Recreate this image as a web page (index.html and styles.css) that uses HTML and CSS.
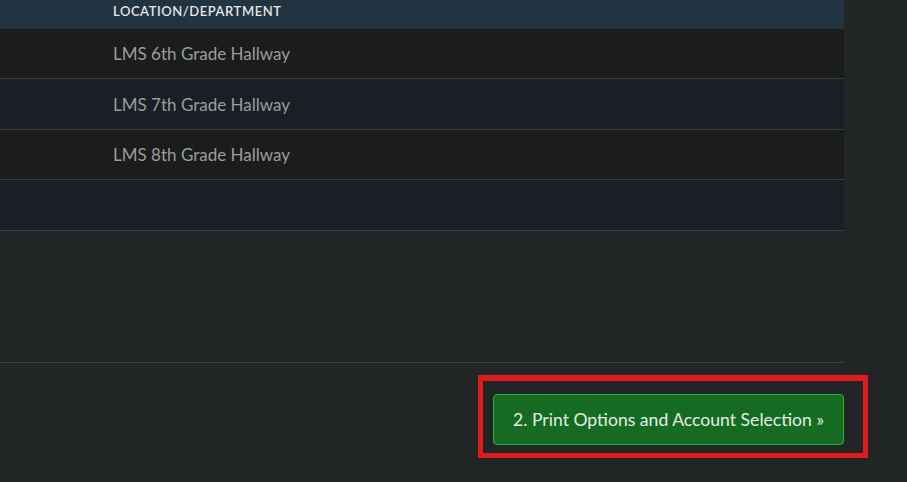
FILE: index.html
```html
<!DOCTYPE html>
<html>
<head>
<meta charset="utf-8">
<link rel="stylesheet" href="styles.css">
</head>
<body>
<div class="page">
  <div class="main">
    <div class="grid">
      <div class="row head"><div class="c-sel"></div><div class="c-loc">LOCATION/DEPARTMENT</div></div>
      <div class="row odd r1"><div class="c-sel"></div><div class="c-loc">LMS 6th Grade Hallway</div></div>
      <div class="row even"><div class="c-sel"></div><div class="c-loc">LMS 7th Grade Hallway</div></div>
      <div class="row odd r3"><div class="c-sel"></div><div class="c-loc">LMS 8th Grade Hallway</div></div>
      <div class="row even"><div class="c-sel"></div><div class="c-loc"></div></div>
    </div>
    <div class="spacer"></div>
    <div class="actions">
      <div class="btn-wrap">
        <button class="btn-next">2. Print Options and Account Selection »</button>
        <span class="highlight"></span>
      </div>
    </div>
  </div>
</div>
</body>
</html>
```
FILE: styles.css
```css
html, body {
  margin: 0;
  padding: 0;
  background: #222526;
  height: 100%;
}
body {
  font-family: "Lato", "Noto Sans", sans-serif;
  overflow: hidden;
}
.page {
  width: 907px;
  height: 482px;
}
.main {
  width: 844px;
}
.grid {
  display: flex;
  flex-direction: column;
}
.row {
  display: flex;
  align-items: center;
  height: 50px;
  box-sizing: border-box;
  border-bottom: 1px solid #3a3e41;
  color: #9c9c9b;
  font-size: 17px;
}
.row.r1, .row.r3 {
  height: 50px;
}
.row.even {
  height: 51px;
}
.row.head {
  height: 29px;
  align-items: flex-start;
  border-bottom: none;
  background: #223341;
  color: #e3e6e8;
  font-size: 13px;
  font-weight: 600;
  line-height: 22px;
  letter-spacing: 0.55px;
}
.c-sel {
  width: 113px;
  flex: none;
}
.c-loc {
  flex: 1;
}
.odd { background: #1b1c1e; }
.even { background: #1a1f25; }
.spacer {
  height: 132px;
  box-sizing: border-box;
  border-bottom: 1px solid #3d4043;
}
.actions {
  display: flex;
  justify-content: flex-end;
  padding-top: 31px;
}
.btn-wrap {
  position: relative;
}
.btn-next {
  display: block;
  width: 351px;
  height: 51px;
  background: #156b22;
  border: 1px solid #2bb33b;
  border-radius: 4px;
  color: #e4eee4;
  font-family: "Lato", "Noto Sans", sans-serif;
  font-size: 17.6px;
  padding: 0;
}
.highlight {
  position: absolute;
  left: -15px;
  top: -19px;
  right: -24px;
  bottom: -13px;
  border: 5px solid #e01b1b;
  border-top-width: 6px;
}
```
